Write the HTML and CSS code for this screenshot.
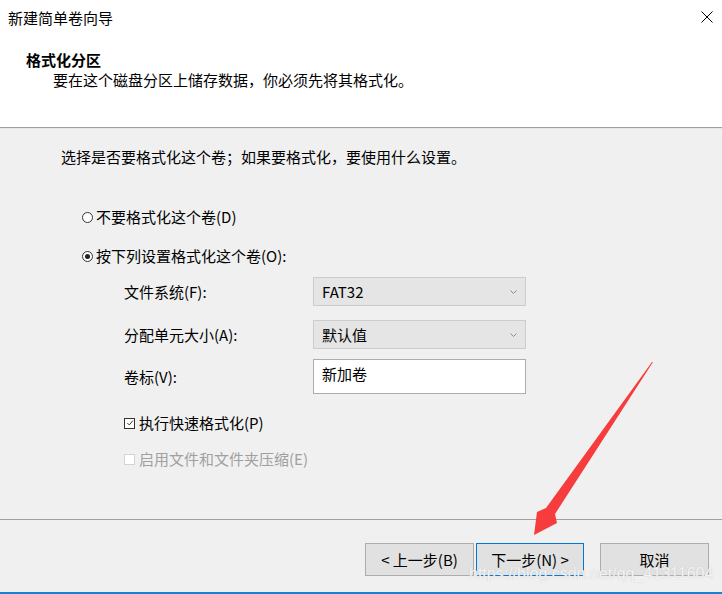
FILE: index.html
```html
<!DOCTYPE html>
<html lang="zh-CN">
<head>
    <meta charset="UTF-8">
    <title>新建简单卷向导</title>
    <link rel="stylesheet" href="styles.css">
</head>
<body>
    <div id="wizard">
        <!-- Barra de título -->
        <div id="title-bar">
            <span>新建简单卷向导</span>
            <svg class="close-icon" width="12" height="12" viewBox="0 0 12 12">
                <path d="M0.5 0.5 L11.5 11.5 M11.5 0.5 L0.5 11.5" stroke="#000" stroke-width="1" fill="none"/>
            </svg>
        </div>

        <!-- Cabecera -->
        <div id="header">
            <div class="header-title">格式化分区</div>
            <div class="header-desc">要在这个磁盘分区上储存数据，你必须先将其格式化。</div>
        </div>

        <!-- Contenido -->
        <div id="content">
            <div class="intro">选择是否要格式化这个卷；如果要格式化，要使用什么设置。</div>

            <div class="radio radio-first"><span class="radio-mark"></span>不要格式化这个卷(D)</div>
            <div class="radio radio-second checked"><span class="radio-mark"></span>按下列设置格式化这个卷(O):</div>

            <div class="options">
                <div class="field field-fs">
                    <span class="field-label">文件系统(F):</span>
                    <div class="combo">FAT32
                        <svg class="chevron" width="7" height="4" viewBox="0 0 7 4"><path d="M0.5 0.5 L3.5 3.5 L6.5 0.5" stroke="#8a8a8a" fill="none"/></svg>
                    </div>
                </div>
                <div class="field field-size">
                    <span class="field-label">分配单元大小(A):</span>
                    <div class="combo">默认值
                        <svg class="chevron" width="7" height="4" viewBox="0 0 7 4"><path d="M0.5 0.5 L3.5 3.5 L6.5 0.5" stroke="#8a8a8a" fill="none"/></svg>
                    </div>
                </div>
                <div class="field field-label-row">
                    <span class="field-label">卷标(V):</span>
                    <div class="textbox">新加卷</div>
                </div>

                <div class="check check-quick checked">
                    <span class="check-mark">
                        <svg width="9" height="9" viewBox="0 0 9 9"><path d="M1.5 4.5 L3.7 6.7 L7.8 1.8" stroke="#333" stroke-width="1.1" fill="none"/></svg>
                    </span>执行快速格式化(P)
                </div>
                <div class="check check-compress disabled"><span class="check-mark"></span>启用文件和文件夹压缩(E)</div>
            </div>
        </div>

        <!-- Botones -->
        <div id="footer">
            <button class="btn">&lt; 上一步(B)</button>
            <button class="btn btn-focus">下一步(N) &gt;</button>
            <button class="btn btn-cancel">取消</button>
        </div>
        <div id="bottom-line"></div>
    </div>

    <!-- Flecha roja y marca de agua encima -->
    <svg id="arrow" width="722" height="594" viewBox="0 0 722 594">
        <polygon points="653,362 555,514 557,523 534,535 537,512 546,508 652,362" fill="#f63c3c"/>
    </svg>
    <div id="watermark">https://blog.csdn.net/qq_41311604</div>
</body>
</html>
```

FILE: styles.css
```css
/* Estilos */
body, html {
    margin: 0;
    padding: 0;
    font-family: "Noto Sans CJK SC", "Noto Sans", sans-serif;
    font-size: 15px;
    color: #000;
    background-color: #f0f0f0;
}

#wizard {
    width: 722px;
    height: 594px;
    display: flex;
    flex-direction: column;
    overflow: hidden;
}

#title-bar {
    height: 34px;
    background-color: #fff;
    display: flex;
    justify-content: space-between;
    align-items: center;
    padding: 0 9px 0 8px;
    flex-shrink: 0;
}

#header {
    background-color: #fff;
    border-bottom: 1px solid #a0a0a0;
    padding-top: 16px;
    box-sizing: border-box;
    height: 94px;
    flex-shrink: 0;
}

.header-title {
    font-weight: bold;
    line-height: 20px;
    padding-left: 26px;
}

.header-desc {
    line-height: 20px;
    padding-left: 53px;
}

#content {
    flex-grow: 1;
    border-top: 1px solid #e6e6e6;
    box-sizing: border-box;
}

.intro {
    margin: 18px 0 0 61px;
    line-height: 20px;
}

.radio {
    display: flex;
    align-items: center;
    line-height: 20px;
    margin-left: 82px;
}

.radio-first { margin-top: 40px; }
.radio-second { margin-top: 19px; }

.radio-mark {
    width: 9px;
    height: 9px;
    border: 1px solid #333;
    border-radius: 50%;
    background-color: #fff;
    margin-right: 3px;
    position: relative;
}

.radio.checked .radio-mark::after {
    content: "";
    position: absolute;
    left: 2px;
    top: 2px;
    width: 5px;
    height: 5px;
    border-radius: 50%;
    background-color: #222;
}

.options {
    margin-left: 124px;
}

.field {
    display: flex;
    align-items: center;
}

.field-fs { margin-top: 11px; }
.field-size { margin-top: 14px; }
.field-label-row { margin-top: 10px; }

.field-label {
    width: 189px;
}

.combo {
    width: 213px;
    height: 29px;
    box-sizing: border-box;
    background-color: #e5e5e5;
    border: 1px solid #cccccc;
    display: flex;
    align-items: center;
    justify-content: space-between;
    padding: 0 8px 0 8px;
}

.chevron {
    margin-top: 1px;
}

.textbox {
    width: 213px;
    height: 35px;
    box-sizing: border-box;
    background-color: #fff;
    border: 1px solid #adadad;
    padding: 4px 0 0 8px;
    line-height: 20px;
}

.check {
    display: flex;
    align-items: center;
    line-height: 20px;
}

.check-quick { margin-top: 19px; }
.check-compress { margin-top: 16px; }

.check-mark {
    width: 9px;
    height: 9px;
    border: 1px solid #333;
    background-color: #fff;
    margin-right: 4px;
    display: flex;
    align-items: center;
    justify-content: center;
}

.check-mark svg {
    width: 8px;
    height: 8px;
}

.check.disabled {
    color: #a0a0a0;
}

.check.disabled .check-mark {
    border-color: #d4d4d4;
}

#footer {
    height: 73px;
    box-sizing: border-box;
    border-top: 1px solid #a0a0a0;
    display: flex;
    justify-content: flex-end;
    padding: 23px 13px 0 0;
    flex-shrink: 0;
}

.btn {
    width: 109px;
    height: 33px;
    box-sizing: border-box;
    background-color: #e1e1e1;
    border: 1px solid #adadad;
    font-family: "Noto Sans CJK SC", "Noto Sans", sans-serif;
    font-size: 15px;
    color: #000;
    padding: 0;
    margin-left: 2px;
}

.btn-focus {
    border: 1px solid #0078d7;
    width: 108px;
}

.btn-cancel {
    margin-left: 16px;
}

#bottom-line {
    height: 2px;
    background-color: #1a7fd6;
    flex-shrink: 0;
}

#arrow {
    position: absolute;
    left: 0;
    top: 0;
    pointer-events: none;
}

/* marca de agua, va encima de los botones como en la captura */
#watermark {
    position: absolute;
    left: 469px;
    top: 565px;
    font-family: "Liberation Sans", Arial, sans-serif;
    font-size: 16px;
    line-height: 18px;
    color: rgba(255, 255, 255, 0.85);
    text-shadow: 0 0 1px #b8b8b8;
    pointer-events: none;
}
```
